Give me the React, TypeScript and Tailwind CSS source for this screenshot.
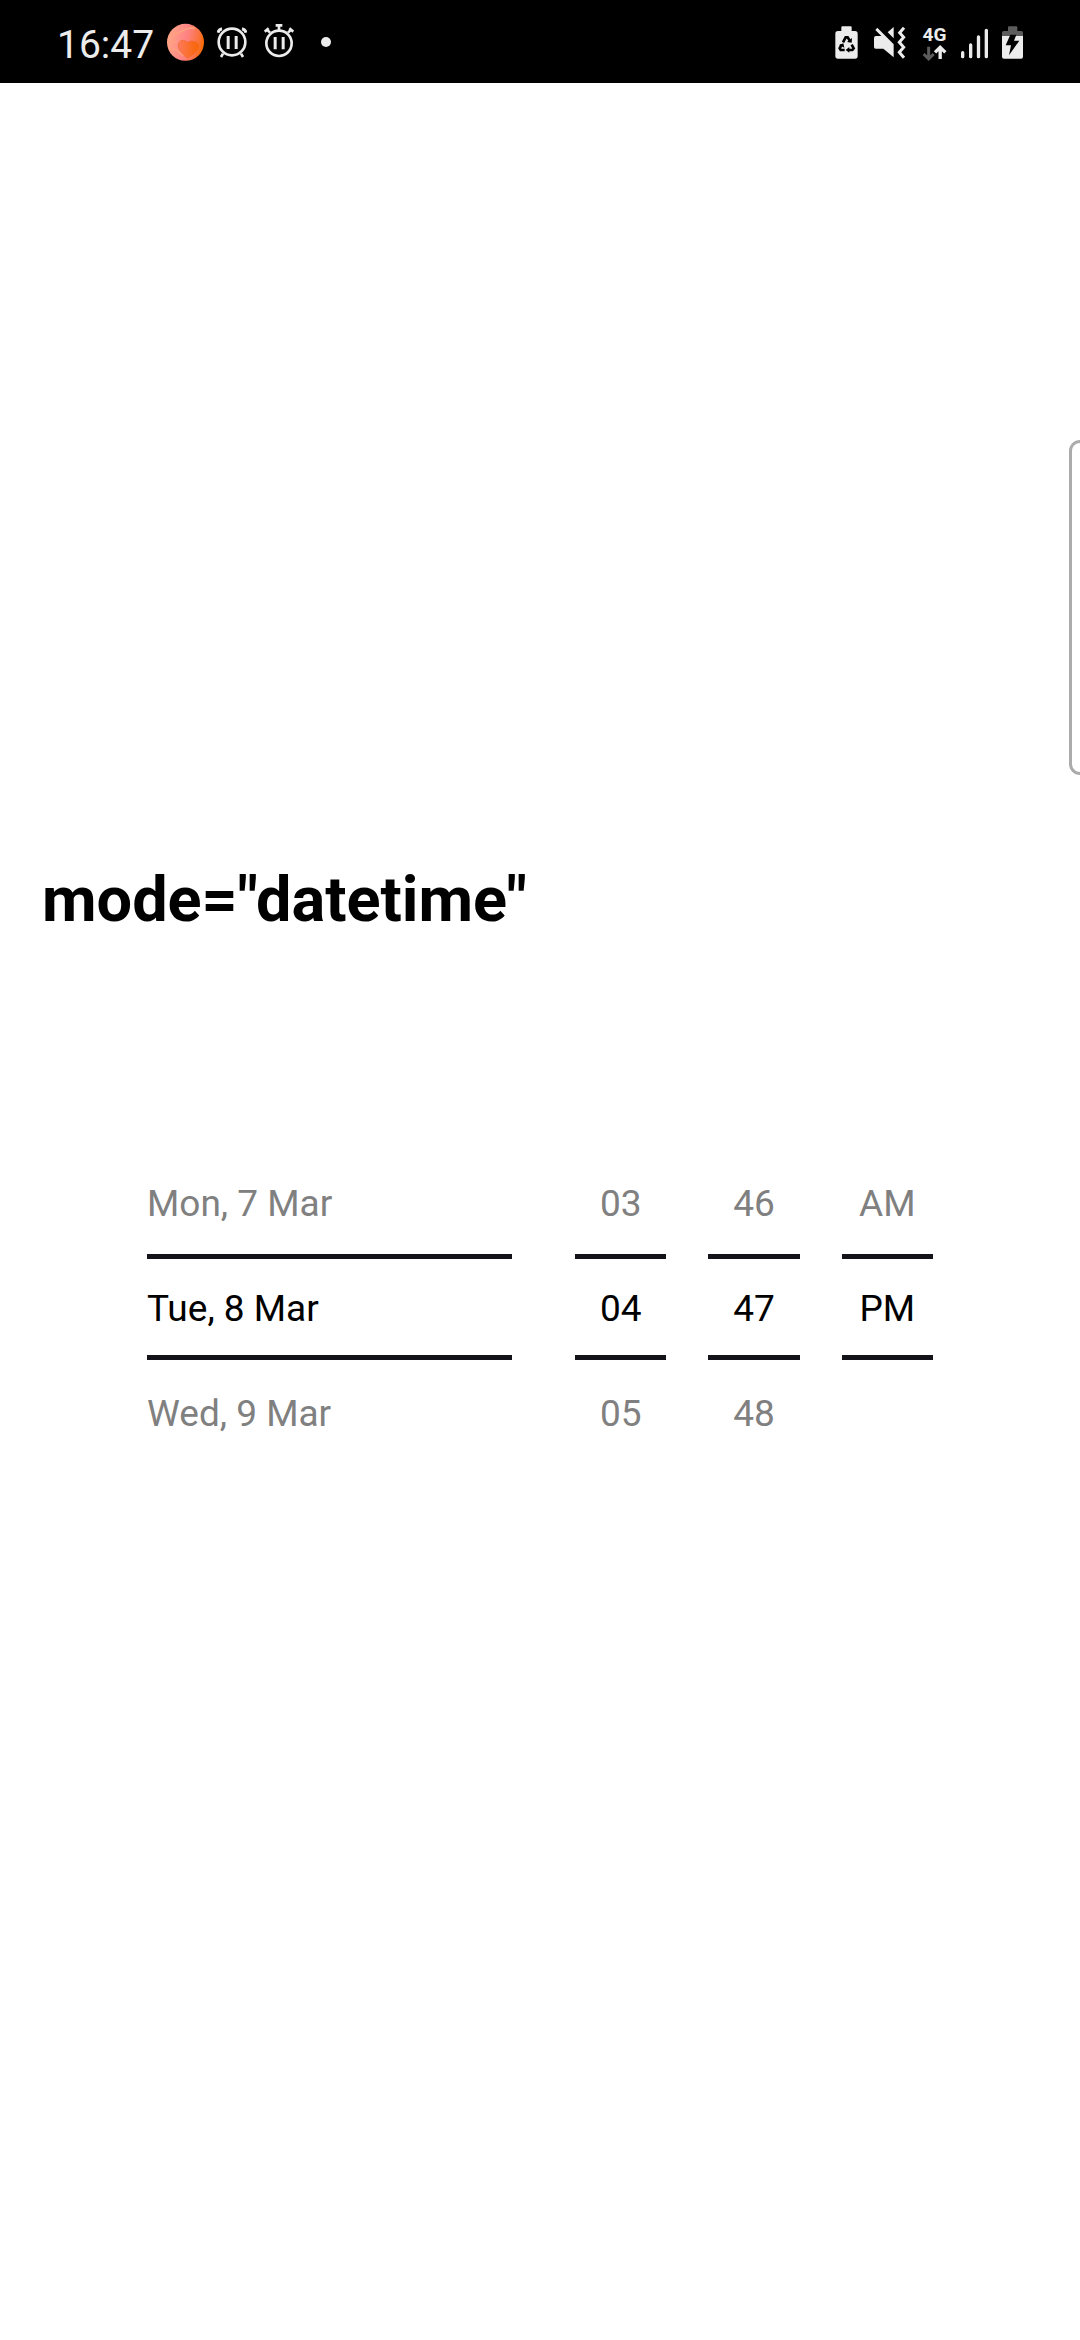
const columns = [
  { label: 'Date', wide: true, values: ['Mon, 7 Mar', 'Tue, 8 Mar', 'Wed, 9 Mar'] },
  { label: 'Hour', wide: false, values: ['03', '04', '05'] },
  { label: 'Minute', wide: false, values: ['46', '47', '48'] },
  { label: 'AM or PM', wide: false, values: ['AM', 'PM', ''] },
];

function Column({ label, wide, values }: (typeof columns)[number]) {
  const align = wide ? 'text-left' : 'text-center';
  const [previous, current, next] = values;
  return (
    <div role="group" aria-label={label} className={`flex min-w-0 flex-col ${align}`}>
      <button type="button" className={`h-[102px] pt-[2px] text-[#808080] ${align}`}>{previous}</button>
      <button
        type="button"
        aria-current="true"
        className={`h-[106px] border-y-[5px] border-[#15131a] pt-[4px] text-black ${align}`}
      >
        {current}
      </button>
      {next && <button type="button" className={`h-[106px] pt-[2px] text-[#808080] ${align}`}>{next}</button>}
    </div>
  );
}

function StatusBar() {
  return (
    <header className="flex h-[83px] items-center justify-between bg-black px-[57px] text-[#ececec]">
      <div className="flex items-center">
        <time className="w-[110px] pt-[6px] text-[39px] leading-[40px]">16:47</time>
        <svg className="h-9 w-[38px] overflow-visible" viewBox="381 72 114 108" aria-hidden="true">
          <defs>
            <linearGradient id="planet" x1="0" y1="0.35" x2="1" y2="0.55">
              <stop offset="0" stopColor="#ffa888" />
              <stop offset="0.5" stopColor="#ff8385" />
              <stop offset="0.8" stopColor="#fb7444" />
              <stop offset="1" stopColor="#f86a00" />
            </linearGradient>
            <linearGradient id="heart" x1="0" y1="0" x2="1" y2="0">
              <stop offset="0" stopColor="#fd7a5c" />
              <stop offset="1" stopColor="#f86500" />
            </linearGradient>
          </defs>
          <circle cx="436.5" cy="127" r="55.500" fill="url(#planet)" />
          <path d="M390 103q24-2 40-12t34-6M386 126q14-2 24 2M388 148q14-6 26 6t22 12" fill="none" stroke="#ff9f80" strokeWidth="6" />
          <path d="M442 174c-12-8-27-24-27-38 0-17 20-19 27-8 10-9 34-4 34 10 0 14-18 27-34 36z" fill="url(#heart)" stroke="#ef6a28" strokeWidth="2" />
        </svg>
        <svg className="ml-3 h-9 w-[30px]" viewBox="532 72 90 108" fill="none" stroke="currentColor" strokeWidth="8" aria-hidden="true">
          <circle cx="577" cy="126" r="40" />
          <path d="M565.500 108v39M589.500 108v39" strokeWidth="9" />
          <path d="M535 98q2-10 12-12M619 98q-2-10-12-12" strokeWidth="9" />
          <path d="M550 161l-6 10M604 161l6 10" />
        </svg>
        <svg className="ml-[17px] h-9 w-[30px]" viewBox="673 72 90 108" fill="none" stroke="currentColor" strokeWidth="8" aria-hidden="true">
          <circle cx="718" cy="130" r="38" />
          <path d="M706.500 111v37M730.500 111v37" strokeWidth="9" />
          <path d="M708 76h20M718 74v16" />
          <path d="M675 95l12-10M681 88l10 10M761 95l-12-10M755 88l-10 10" />
        </svg>
        <span className="ml-[27px] size-[10px] rounded-full bg-current" />
      </div>
      <div className="flex items-center">
        <svg className="h-9 w-[23px]" viewBox="72 72 69 108" fill="currentColor" aria-hidden="true">
          <path d="M91 93V82q0-3 3-3h25q3 0 3 3v11h10q8 0 8 8v67q0 8-8 8H81q-8 0-8-8v-67q0-8 8-8z" />
          <g fill="none" stroke="#000" strokeWidth="8">
            <path d="M96 127l8-15h6l7 11" />
            <path d="M122 134l6 11-4 5h-12" />
            <path d="M101 150H89l-3-5 6-11" />
          </g>
          <path fill="#000" d="M108 126l14 2 1-14zM115 141l-11 9 11 8zM84 135l13-5 3 13z" />
        </svg>
        <svg className="ml-4 h-9 w-8" viewBox="190 72 96 108" fill="currentColor" aria-hidden="true">
          <path d="M200 83l49 50v39l-31-26h-23q-5 0-5-5v-27q0-6 6-6h16l-18-18z" />
          <path d="M231 97l18-16v34z" />
          <path d="M280 83l-13 15 12 14-13 15 13 15-13 15 14 16" fill="none" stroke="currentColor" strokeWidth="9" />
        </svg>
        <div className="ml-4 flex h-9 w-[25px] flex-col items-center">
          <span className="text-[19px] leading-[21px] font-bold">4G</span>
          <svg className="h-[15px] w-[25px] overflow-visible" viewBox="336 135 75 45" fill="none" aria-hidden="true">
            <path d="M356 140v36M341 162l15 15 15-15" stroke="#5c5c5c" strokeWidth="9" />
            <path d="M390.500 177v-35M375 157l15.500-15 15.500 15" stroke="currentColor" strokeWidth="10" />
          </svg>
        </div>
        <svg className="ml-[14px] h-9 w-7" viewBox="453 72 84 108" fill="none" stroke="currentColor" strokeWidth="10" strokeLinecap="round" aria-hidden="true">
          <path d="M458 158v12M482 135v35M505.500 111v59M529 91v79" />
        </svg>
        <svg className="ml-[13px] h-9 w-[21px]" viewBox="576 72 63 108" fill="currentColor" aria-hidden="true">
          <path d="M594 93V82q0-3 3-3h22q3 0 3 3v11h12q5 0 5 5v12h-63V98q0-5 5-5z" fill="#5c5c5c" />
          <path d="M576 108h63v62q0 6-6 6h-51q-6 0-6-6z" />
          <path d="M601 104h18l-7 18h16l-31 44 6-30h-16z" fill="#000" />
        </svg>
      </div>
    </header>
  );
}

export default function App() {
  return (
    <div className="relative min-h-screen bg-white font-[Roboto,sans-serif]">
      <StatusBar />
      <aside aria-label="Edge panel" className="absolute top-[440px] right-0 h-[335px] w-[11px] rounded-l-xl border-[3px] border-r-0 border-[#ababab]" />
      <main className="pt-[777px]">
        <h1 className="px-[42px] text-[63px] leading-[80px] font-bold text-black">mode="datetime"</h1>
        <section
          aria-label="Date and time picker"
          className="mt-[212px] grid grid-cols-[4fr_63px_1fr_42px_1fr_42px_1fr] px-[147px] text-[37px] leading-[44px] [&>*:nth-child(2)]:col-start-3 [&>*:nth-child(3)]:col-start-5 [&>*:nth-child(4)]:col-start-7"
        >
          {columns.map((column) => (
            <Column key={column.label} {...column} />
          ))}
        </section>
      </main>
    </div>
  );
}
